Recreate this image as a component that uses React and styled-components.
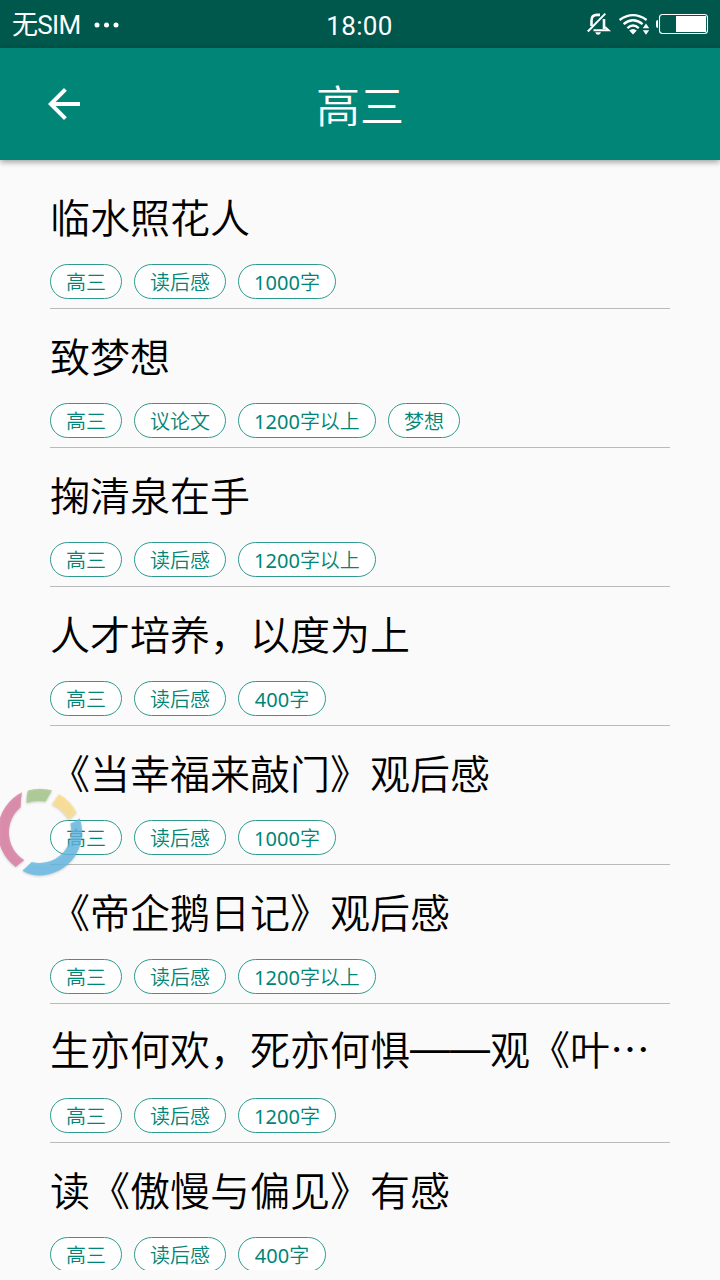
import styled, { createGlobalStyle } from 'styled-components';

const GlobalStyle = createGlobalStyle`
   body {
      margin: 0;
      background: #fafafa;
   }
   * {
      box-sizing: border-box;
   }
`;

const Screen = styled.div`
   position: relative;
   display: flex;
   flex-direction: column;
   width: 720px;
   height: 1280px;
   overflow: hidden;
   background: #fafafa;
   font-family: 'Noto Sans CJK SC', sans-serif;
`;

const StatusBar = styled.div`
   display: grid;
   grid-template-columns: 1fr auto 1fr;
   align-items: center;
   height: 48px;
   flex: none;
   background: #00574b;
   color: #fff;
   font: 26px/48px Roboto, 'Noto Sans CJK SC', sans-serif;
`;

const Carrier = styled.div`
   display: flex;
   align-items: center;
   height: 48px;
   gap: 14px;
   padding: 2px 0 0 12px;
   letter-spacing: -0.7px;
`;

const Clock = styled.div`
   height: 48px;
   letter-spacing: 0.4px;
   padding: 2px 1px 0 0;
`;

const StatusIcons = styled.svg`
   justify-self: end;
   display: block;
`;

const Toolbar = styled.header`
   display: grid;
   grid-template-columns: 128px 1fr 128px;
   align-items: center;
   height: 112px;
   flex: none;
   background: #008577;
   color: #fff;
   box-shadow: 0 2px 6px rgba(0, 0, 0, 0.38);
`;

const BackButton = styled.button`
   display: flex;
   justify-content: center;
   padding: 0;
   border: 0;
   background: none;
`;

const ToolbarTitle = styled.h1`
   margin: 0;
   text-align: center;
   font-size: 44px;
   font-weight: 350;
   line-height: 110px;
`;

const List = styled.ul`
   flex: 1;
   min-height: 0;
   margin: 10px 50px;
   padding: 0;
   overflow: hidden;
   list-style: none;
`;

const Item = styled.li`
   height: 139px;
   border-bottom: 1px solid #bababa;
`;

const ItemTitle = styled.h2`
   height: 94px;
   margin: 0;
   color: #000;
   font-size: 40px;
   font-weight: 350;
   line-height: ${(p) => (p.$raised ? 89 : 93)}px;
   white-space: nowrap;
`;

const Dash = styled.span`
   font-family: 'Liberation Sans', sans-serif;
   font-weight: 400;
   line-height: 0;
   vertical-align: 3px;
`;

const Tags = styled.div`
   display: flex;
   gap: 12px;
`;

const Tag = styled.span`
   width: ${(p) => p.$width}px;
   height: 35px;
   border: 1px solid #2d9a8f;
   border-radius: 18px;
   background: #fff;
   color: #008577;
   text-align: center;
   font: 350 20px/34px 'Noto Sans', 'Noto Sans CJK SC', sans-serif;
   line-height: 35px;
   white-space: nowrap;
`;

const Digits = styled.span`
   font-weight: 400;
`;

const FloatingRing = styled.svg`
   position: absolute;
   left: 0;
   top: 780px;
   filter: drop-shadow(0 1px 1px rgba(0, 0, 0, 0.22));
`;

const tagWidths = {
   高三: 72,
   读后感: 92,
   议论文: 92,
   梦想: 72,
   '400字': 88,
   '1000字': 98,
   '1200字': 98,
   '1200字以上': 138,
};

const essays = [
   { title: '临水照花人', tags: ['高三', '读后感', '1000字'] },
   { title: '致梦想', tags: ['高三', '议论文', '1200字以上', '梦想'] },
   { title: '掬清泉在手', tags: ['高三', '读后感', '1200字以上'] },
   { title: '人才培养，以度为上', tags: ['高三', '读后感', '400字'] },
   { title: '《当幸福来敲门》观后感', tags: ['高三', '读后感', '1000字'] },
   { title: '《帝企鹅日记》观后感', tags: ['高三', '读后感', '1200字以上'] },
   { title: '生亦何欢，死亦何惧——观《叶…', tags: ['高三', '读后感', '1200字'], raised: true },
   { title: '读《傲慢与偏见》有感', tags: ['高三', '读后感', '400字'] },
];

const SystemIcons = () => (
   <StatusIcons width="150" height="48" viewBox="0 0 150 48" fill="none" stroke="#fff">
      {/* muted bell */}
      <path d="M21.5 26V20.5Q21.5 15 27 14.9H30M34 19V29" strokeWidth="2.6" />
      <path d="M23.5 30.2H38.5L35 27" strokeWidth="2" />
      <path d="M17.8 31.5L35.3 13.6" strokeWidth="2" />
      <path d="M25.2 32.2H31Q30 34.8 28.1 34.8Q26 34.8 25.2 32.2Z" fill="#fff" stroke="none" />
      {/* wifi */}
      <path d="M49.6 20Q63 10.4 76.6 20" strokeWidth="2.3" />
      <path d="M53.6 24.2Q63 16.4 72.6 24.2" strokeWidth="2.3" />
      <path d="M57.4 28.2Q63 22.8 68.8 28.2" strokeWidth="2.3" />
      <path d="M59.2 30.4Q63 27.4 66.8 30.4L63 34.4Z" fill="#fff" stroke="none" />
      <path d="M76 23.6L79.2 28.2H72.8ZM72.8 30.2H79.2L76 34.8Z" fill="#fff" stroke="none" />
      {/* battery */}
      <rect x="89.5" y="14.5" width="48" height="19" rx="3" strokeWidth="1.1" />
      <rect x="106" y="16" width="30" height="16" fill="#fff" stroke="none" />
      <path d="M88 20Q86 20 86 22V26Q86 28 88 28Z" fill="#fff" stroke="none" />
   </StatusIcons>
);

const Ring = () => (
   <FloatingRing width="90" height="104" viewBox="0 0 90 104">
      <g opacity="0.8">
         <path d="M22 12.3Q20.6 20 20.7 27.3A32.5 32.5 0 0 0 24.3 80L15.7 87A44 44 0 0 1 22 12.3Z" fill="#dd7ba2" />
         <path d="M28 10.6Q39 7 52 10.3L45.7 21.5Q36 19.8 26.5 23Q26.4 15 28 10.6Z" fill="#a6c88a" />
         <path d="M59 14Q70 20 76.5 32.5L68.7 39.8Q62 29 51.7 24.3Z" fill="#ffe08c" />
         <path d="M79.7 38.3A43 43 0 0 1 40 95.4Q30 95.4 22.3 90.7L31.7 82A31.8 31.8 0 0 0 70.3 43.5Q75 42 79.7 38.3Z" fill="#65bae6" />
      </g>
   </FloatingRing>
);

const renderTitle = (title) =>
   title.split(/(——)/).map((part) => (part === '——' ? <Dash key={part}>{part}</Dash> : part));

const renderTag = (tag) =>
   tag.split(/(\d+)/).map((part) => (/\d/.test(part) ? <Digits key={part}>{part}</Digits> : part));

export default function App() {
   return (
      <Screen lang="zh-CN">
         <GlobalStyle />
         <StatusBar>
            <Carrier>
               <span>无SIM</span>
               <svg width="26" height="6" viewBox="0 0 26 6" fill="#fff">
                  <circle cx="3" cy="3" r="2.5" />
                  <circle cx="12.5" cy="3" r="2.5" />
                  <circle cx="22" cy="3" r="2.5" />
               </svg>
            </Carrier>
            <Clock>18:00</Clock>
            <SystemIcons />
         </StatusBar>

         <Toolbar>
            <BackButton type="button" aria-label="返回">
               <svg width="48" height="48" viewBox="0 0 24 24" fill="#fff">
                  <path d="M20 11H7.83l5.59-5.59L12 4l-8 8 8 8 1.41-1.41L7.83 13H20v-2z" />
               </svg>
            </BackButton>
            <ToolbarTitle>高三</ToolbarTitle>
         </Toolbar>

         <List>
            {essays.map((essay) => (
               <Item key={essay.title}>
                  <ItemTitle $raised={essay.raised}>{renderTitle(essay.title)}</ItemTitle>
                  <Tags>
                     {essay.tags.map((tag) => (
                        <Tag key={tag} $width={tagWidths[tag]}>
                           {renderTag(tag)}
                        </Tag>
                     ))}
                  </Tags>
               </Item>
            ))}
         </List>

         <Ring />
      </Screen>
   );
}
